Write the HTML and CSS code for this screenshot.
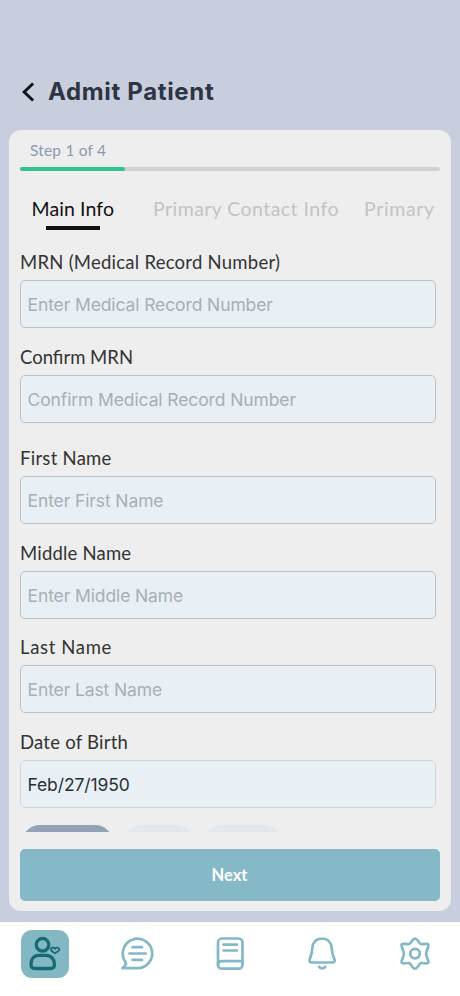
FILE: index.html
```html
<!DOCTYPE html>
<html lang="en">
<head>
<meta charset="utf-8">
<meta name="viewport" content="width=device-width, initial-scale=1">
<title>Admit Patient</title>
<link rel="stylesheet" href="styles.css">
</head>
<body>
<div class="app">
  <header class="header">
    <svg class="back" width="14" height="20" viewBox="0 0 14 20"><path d="M11 2.500 3.200 10l7.800 7.500"/></svg>
    <h1 class="title">Admit Patient</h1>
  </header>
  <main class="card">
    <div class="step">Step 1 of 4</div>
    <div class="progress"><div class="progress-fill"></div></div>
    <nav class="tabs">
      <span class="tab tab-main active">Main Info</span>
      <span class="tab tab-contact">Primary Contact Info</span>
      <span class="tab tab-primary">Primary</span>
    </nav>
    <form class="form">
      <div class="field"><label class="label l-mrn">MRN (Medical Record Number)</label><div class="input">Enter Medical Record Number</div></div>
      <div class="field field-wide"><label class="label">Confirm MRN</label><div class="input">Confirm Medical Record Number</div></div>
      <div class="field"><label class="label l-first">First Name</label><div class="input">Enter First Name</div></div>
      <div class="field"><label class="label l-middle">Middle Name</label><div class="input">Enter Middle Name</div></div>
      <div class="field"><label class="label l-last">Last Name</label><div class="input">Enter Last Name</div></div>
      <div class="field"><label class="label l-dob">Date of Birth</label><div class="input filled">Feb/27/1950</div></div>
      <div class="chips"><span class="chip chip-a"></span><span class="chip chip-b"></span><span class="chip chip-c"></span></div>
    </form>
    <button class="next" type="button">Next</button>
  </main>
  <nav class="bottom">
    <a class="nav-item selected"><svg width="48" height="48" viewBox="0 0 48 48"><circle cx="21.500" cy="14.800" r="6.300"/><path d="M18 25.300h7c5 0 8.500 3.800 8.500 9 0 3-1.500 4.200-4.200 4.200H14.200c-2.700 0-4.200-1.200-4.200-4.200 0-5.200 3-9 8-9z"/><path class="heart" d="M34 23.300c-2.200-1.200-4-2.300-4-4 0-1.900 2.600-2.200 4-.6 1.400-1.600 4.200-1.300 4.200.6 0 1.700-2 2.800-4.200 4z"/></svg></a>
    <a class="nav-item"><svg width="48" height="48" viewBox="0 0 48 48"><path d="M9.500 38.200h15.200A14.700 14.700 0 1 0 12.500 32c.8 1.200.5 2.200-.3 3.300z"/><path d="M19.500 17.200H29M16.500 23.500h16.200M19.500 29.900H29"/></svg></a>
    <a class="nav-item"><svg width="48" height="48" viewBox="0 0 48 48"><rect x="12" y="8.500" width="24.500" height="30.200" rx="4"/><path d="M12 35c0-2.500 1.500-3.800 4-3.800h20.500M17.500 14.700h13.400M17.500 20.500h13.400"/></svg></a>
    <a class="nav-item"><svg width="48" height="48" viewBox="0 0 48 48"><path d="M24 8.500c-5.700 0-9.300 4-9.600 9.200-.3 6.300-1.700 8.900-2.700 11.800-.7 2 .2 3 2.200 3h20.400c2 0 2.900-1 2.200-3-1-2.900-2.600-5.500-2.900-11.800-.3-5.200-3.900-9.200-9.600-9.200z"/><path d="M21 36.800c1.200 2 5.200 2 6.400 0"/></svg></a>
    <a class="nav-item"><svg width="48" height="48" viewBox="0 0 48 48"><circle cx="24" cy="23.600" r="4.800"/><path d="M21.700 10q2.300-3 4.600 0l2.200 3q1.100 1.500 3 1.200l3.400-.4q3.500-.3 2.300 3l-1.400 3.700q-1.300 3.100 0 6.200l1.400 3.700q1.200 3.300-2.300 3l-3.400-.4q-1.900-.3-3 1.200l-2.200 3q-2.300 3-4.600 0l-2.200-3q-1.100-1.500-3-1.200l-3.400.4q-3.500.3-2.300-3l1.400-3.700q1.300-3.100 0-6.200l-1.400-3.700q-1.200-3.300 2.300-3l3.400.4q1.900.3 3-1.200z"/></svg></a>
  </nav>
</div>
</body>
</html>
```
FILE: styles.css
```css
* { box-sizing: border-box; }
body { margin: 0; background: #c8cedd; }
.app { width: 460px; height: 996px; overflow: hidden; display: flex; flex-direction: column; font-family: Lato, "Liberation Sans", sans-serif; }
.header { height: 130px; flex: none; padding: 53px 0 0 21px; display: flex; align-items: center; gap: 13px; }
.back { fill: none; stroke: #111418; stroke-width: 3; stroke-linecap: square; }
.title { margin: 0; font: 700 24px/30px Inter, sans-serif; letter-spacing: .65px; color: #2d3444; }
.card { margin: 0 9px; height: 781px; flex: none; background: #eee; border-radius: 12px; padding: 9px 11px 10px; display: flex; flex-direction: column; }
.step { height: 22px; padding-left: 10px; font-size: 15.500px; line-height: 22px; color: #8b99b0; letter-spacing: .2px; }
.progress { height: 4px; margin-top: 6px; flex: none; border-radius: 2px; background: #d1d1d1; }
.progress-fill { width: 105px; height: 4px; border-radius: 2px; background: #2dc58c; }
.tabs { height: 75px; flex: none; padding: 22px 0 0 11.500px; display: flex; white-space: nowrap; overflow: hidden; color: #c3c3c3; font-size: 19.500px; line-height: 32px; }
.tab { flex: none; }
.tab-main { width: 121.500px; letter-spacing: .1px; }
.tab-contact { width: 211px; letter-spacing: .45px; }
.tab-primary { letter-spacing: .65px; }
.active { color: #111; }
.active::after { content: ""; display: block; width: 54px; height: 4px; margin: 1px 0 0 14px; background: #111; }
.form { height: 586px; flex: none; overflow: hidden; }
.field { width: 416px; height: 94.700px; }
.field-wide { height: 101.200px; }
.label { display: block; height: 34px; line-height: 33px; font-size: 18.500px; color: #333; white-space: nowrap; }
.l-mrn { letter-spacing: .25px; }
.l-first { letter-spacing: .27px; }
.l-middle { letter-spacing: .2px; }
.l-last { letter-spacing: .65px; }
.l-dob { letter-spacing: .23px; }
.input { height: 48px; padding-left: 6.500px; border: 1px solid #b9c2c6; border-radius: 5px; background: #e8f0f6; font: 400 17.500px/47px Inter, "Liberation Sans", sans-serif; letter-spacing: -.11px; color: #a9afb2; white-space: nowrap; }
.filled { color: #2c3033; border-color: #ccd7dc; }
.chips { display: flex; padding: 4px 0 0 2px; }
.chip { height: 36px; border-radius: 18px; background: #e3e8ed; }
.chip-a { width: 91px; background: #94a2b8; margin-right: 11px; }
.chip-b { width: 70px; margin-right: 10px; }
.chip-c { width: 78px; }
.next { width: 420px; height: 52px; margin-top: 17px; padding: 0 1px 0 0; flex: none; border: 0; border-radius: 5px; background: #86b9c8; color: #fff; font: 700 16.500px Lato, sans-serif; }
.bottom { height: 74px; margin-top: 11px; padding: 8px 21.500px 0 20.500px; flex: 1; background: #fff; display: flex; justify-content: space-between; }
.nav-item { width: 48px; height: 48px; border-radius: 11px; }
.nav-item svg { display: block; fill: none; stroke: #83b9c7; stroke-width: 2.700; stroke-linecap: round; stroke-linejoin: round; }
.selected { background: #84b7c4; }
.selected svg { stroke: #146b73; stroke-width: 3.300; }
.selected .heart { stroke-width: 1.800; }
```
